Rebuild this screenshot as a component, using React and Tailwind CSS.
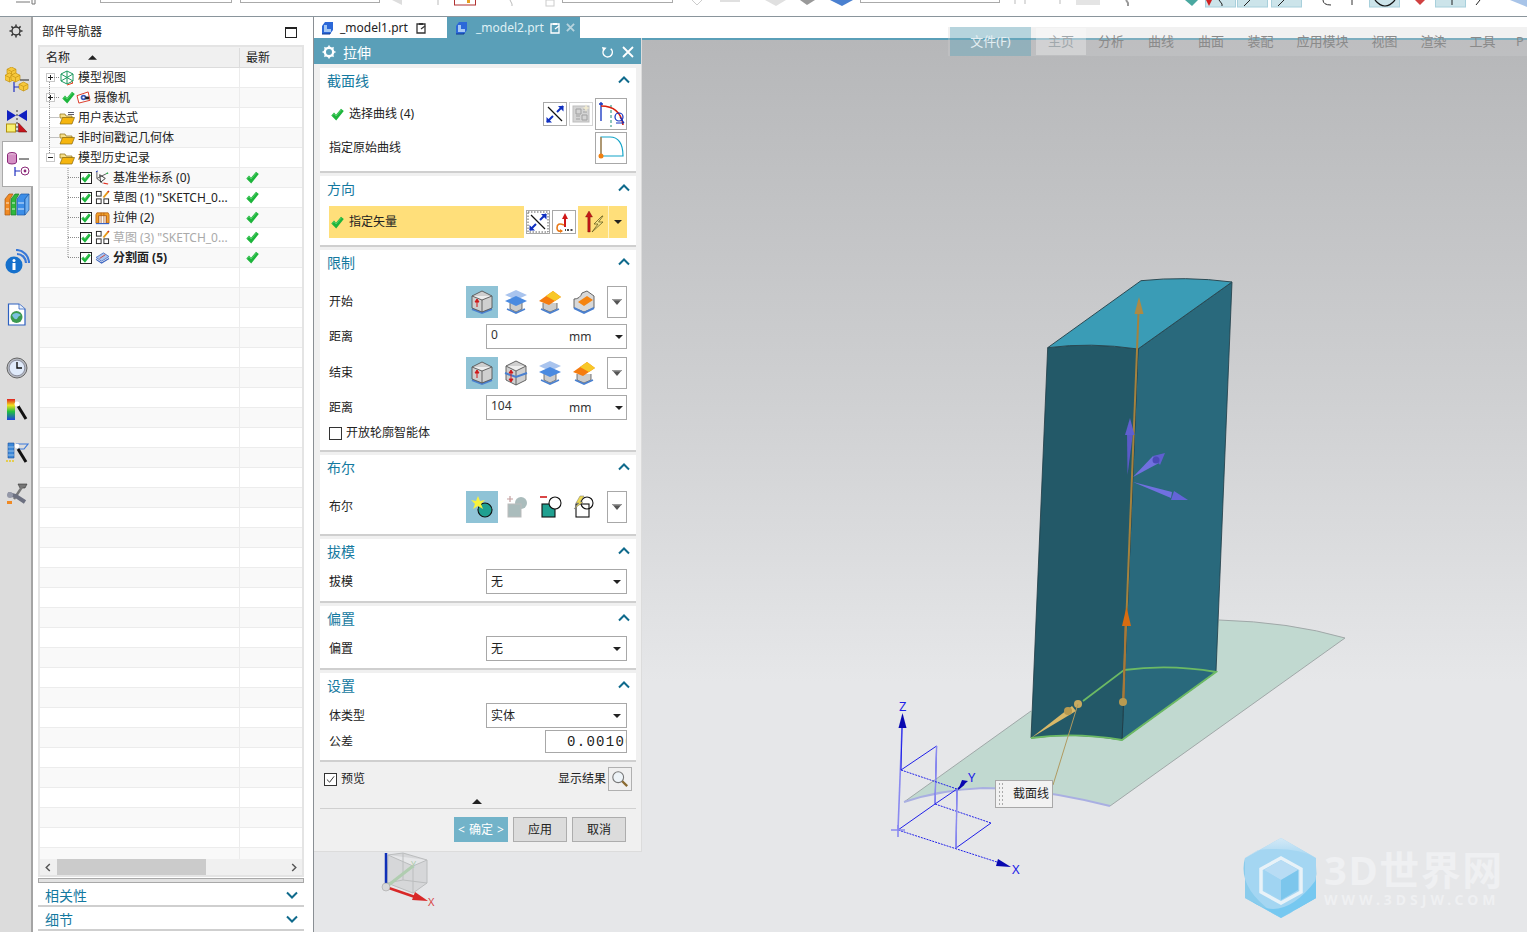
import React from 'react';

/* ---------- small shared drawings ---------- */

function Tick({ className = 'w-[13px] h-[13px]' }) {
  return (
    <svg viewBox="0 0 13 13" className={className}>
      <path d="M0.3 7.5 L3 4.6 L5 6.8 L10 0.8 L12.8 3 L5.2 12.6 Z" fill="#1db53c" />
      <path d="M1.2 7.4 L3 5.6 L5.1 8 L10.2 2" fill="none" stroke="#7be08c" strokeWidth="0.6" />
    </svg>
  );
}

function Chevron({ down = false }) {
  return (
    <svg viewBox="0 0 12 8" className="w-[12px] h-[8px]">
      <path d={down ? 'M1 1.5 L6 6.5 L11 1.5' : 'M1 6.5 L6 1.5 L11 6.5'} fill="none" stroke="#0f6a8c" strokeWidth="2" />
    </svg>
  );
}

function Caret({ color = '#222' }) {
  return (
    <svg viewBox="0 0 8 4" className="w-[8px] h-[4px]">
      <path d="M0 0 H8 L4 4 Z" fill={color} />
    </svg>
  );
}

function Folder({ lines = false }) {
  return (
    <svg viewBox="0 0 16 14" className="w-[16px] h-[14px] shrink-0">
      {lines && <path d="M9 1.5 H15 M9 3.5 H15" stroke="#334" strokeWidth="0.8" />}
      <path d="M1 3 H6 L7 5 H13 V7 H1 Z" fill="#f7e08a" stroke="#8a6a10" strokeWidth="0.7" />
      <path d="M1 13 L3.5 6.5 H15.5 L13 13 Z" fill="#f5b50e" stroke="#8a6a10" strokeWidth="0.7" />
    </svg>
  );
}

function TreeBox({ minus = false }) {
  return (
    <span className="w-[9px] h-[9px] border border-[#c8c8c8] bg-white flex items-center justify-center shrink-0 relative">
      <span className="w-[5px] h-px bg-[#222]" />
      {!minus && <span className="absolute w-px h-[5px] bg-[#222]" />}
    </span>
  );
}

function TreeCheck() {
  return (
    <span className="w-[12px] h-[12px] border border-[#222] bg-white flex items-center justify-center shrink-0">
      <Tick className="w-[10px] h-[10px]" />
    </span>
  );
}

/* ---------- part navigator icons ---------- */

function ModelViewIcon() {
  return (
    <svg viewBox="0 0 16 16" className="w-[16px] h-[16px] shrink-0">
      <path d="M8 1 L14 4 V11 L8 14 L2 11 V4 Z M2 4 L8 7.5 L14 4 M8 7.5 V14 M2 11 L8 7.5 L14 11 M8 1 V7.5" fill="none" stroke="#1b9a5f" strokeWidth="1" />
      <path d="M8 15 L14 13 L12.5 11.5" fill="none" stroke="#e04020" strokeWidth="1" />
    </svg>
  );
}

function CameraIcon() {
  return (
    <svg viewBox="0 0 16 14" className="w-[15px] h-[13px] shrink-0">
      <path d="M1 5 L13 1 L15 10 L3 13 Z" fill="#fff" stroke="#d8301c" strokeWidth="1" />
      <circle cx="8" cy="7" r="3" fill="#3857b8" />
      <circle cx="8" cy="7" r="1.2" fill="#fff" />
      <rect x="10" y="6" width="4" height="3" fill="#222" />
    </svg>
  );
}

function CsysIcon() {
  return (
    <svg viewBox="0 0 16 16" className="w-[15px] h-[15px] shrink-0">
      <path d="M2 1 V9 L8 14 M2 9 L12 4" fill="none" stroke="#555" strokeWidth="1" />
      <path d="M5 5 L11 9 L6 13 Z" fill="none" stroke="#333" strokeWidth="1" />
      <path d="M1 2 L3 1" stroke="#2040d0" strokeWidth="1" />
      <path d="M12 4 L14 3" stroke="#20a040" strokeWidth="1.4" />
      <path d="M9 14 L14 15" stroke="#e03020" strokeWidth="1.2" />
    </svg>
  );
}

function SketchIcon() {
  return (
    <svg viewBox="0 0 16 16" className="w-[15px] h-[15px] shrink-0">
      <rect x="1.5" y="1.5" width="5" height="5" fill="#fff" stroke="#222" />
      <rect x="1.5" y="9.5" width="5" height="5" fill="#fff" stroke="#222" />
      <rect x="9.5" y="9.5" width="5" height="5" fill="#fff" stroke="#222" />
      <path d="M9 8 L14 2" stroke="#e89a18" strokeWidth="2" />
      <path d="M13.5 2.5 L15 1" stroke="#d03020" strokeWidth="1.5" />
    </svg>
  );
}

function ExtrudeIcon() {
  return (
    <svg viewBox="0 0 16 16" className="w-[15px] h-[15px] shrink-0">
      <path d="M2 3 H14 L15 5 V14 H12 V6 H4 V14 H1 V5 Z" fill="#f1a028" stroke="#b05a10" strokeWidth="0.8" />
      <path d="M4 6 V14 M6.5 3 V14 M9.5 3 V14 M12 6 V14" stroke="#b05a10" strokeWidth="0.8" />
      <path d="M1 14.5 H15" stroke="#3060c8" strokeWidth="1.2" />
    </svg>
  );
}

function DivideFaceIcon() {
  return (
    <svg viewBox="0 0 16 14" className="w-[15px] h-[13px] shrink-0">
      <path d="M1 7 L9 2 L15 6 L7 11 Z" fill="#a9c4ee" stroke="#3c64c0" strokeWidth="0.8" />
      <path d="M1 9 L7 13 L15 8" fill="none" stroke="#3c64c0" strokeWidth="1.2" />
      <path d="M5 8 L11 4" stroke="#d8301c" strokeWidth="0.9" />
    </svg>
  );
}

/* ---------- left rail icons ---------- */

function Cube({ x, y, s = 8 }) {
  return (
    <g transform={`translate(${x} ${y}) scale(${s / 8})`}>
      <path d="M0 2 L4 0 L8 2 V6 L4 8 L0 6 Z" fill="#f6c83c" stroke="#c49210" strokeWidth="0.6" />
      <path d="M0 2 L4 4 L8 2 M4 4 V8" fill="none" stroke="#c49210" strokeWidth="0.6" />
    </g>
  );
}

function RailPartsIcon() {
  return (
    <svg viewBox="0 0 24 26" className="w-[24px] h-[26px]">
      <Cube x={2} y={0} s={9} />
      <Cube x={0} y={6} s={9} />
      <Cube x={6} y={6} s={9} />
      <Cube x={14} y={15} s={9} />
      <path d="M9 15 V25 M9 20 H14" stroke="#2030c0" strokeWidth="1.2" fill="none" />
      <path d="M15 13 H24" stroke="#222" strokeWidth="1" />
    </svg>
  );
}

function RailConstraintIcon() {
  return (
    <svg viewBox="0 0 24 24" className="w-[24px] h-[24px]">
      <path d="M2 1 L11 6.5 L2 12 Z M22 1 L13 6.5 L22 12 Z" fill="#1020c0" />
      <path d="M12 1 V24" stroke="#333" strokeWidth="1" strokeDasharray="2 2" />
      <rect x="1.5" y="15" width="9" height="8" fill="#f8f070" stroke="#b09010" strokeWidth="1" />
      <path d="M13.5 14 L22 23 H13.5 Z" fill="#c8141c" stroke="#701010" strokeWidth="0.6" />
    </svg>
  );
}

function RailAssemblyIcon() {
  return (
    <svg viewBox="0 0 24 26" className="w-[24px] h-[26px]">
      <ellipse cx="6" cy="3.5" rx="4.5" ry="2" fill="#e4b8d8" stroke="#8a2878" />
      <path d="M1.5 3.5 V11 A4.5 2 0 0 0 10.5 11 V3.5" fill="#d490c4" stroke="#8a2878" />
      <path d="M13 8 H23" stroke="#222" strokeWidth="1" />
      <path d="M9 16 V25 M9 20 H14" stroke="#2030c0" strokeWidth="1.2" fill="none" />
      <circle cx="19" cy="20" r="4" fill="#fff" stroke="#8a2878" />
      <circle cx="19" cy="20" r="1.4" fill="#8a2878" />
    </svg>
  );
}

function RailBooksIcon() {
  return (
    <svg viewBox="0 0 26 24" className="w-[26px] h-[24px]">
      <path d="M1 6 L5 1 H9 L6 6 V22 H1 Z" fill="#f08a24" stroke="#a85810" strokeWidth="0.7" />
      <path d="M7 6 L11 1 H15 L12 6 V22 H7 Z" fill="#2fb83c" stroke="#1a7a28" strokeWidth="0.7" />
      <path d="M13 6 L17 1 H25 L21 6 V22 H13 Z" fill="#3c8ee8" stroke="#1c5aa8" strokeWidth="0.7" />
      <path d="M21 6 L25 1 V17 L21 22 Z" fill="#6eb0f2" stroke="#1c5aa8" strokeWidth="0.7" />
      <path d="M2 10 H5 M8 10 H11 M14 10 H20 M2 16 H5 M8 16 H11 M14 16 H20" stroke="#fff" strokeWidth="0.8" />
    </svg>
  );
}

function RailInfoIcon() {
  return (
    <svg viewBox="0 0 26 26" className="w-[26px] h-[26px]">
      <path d="M13 5 A9 9 0 0 1 22 14 M12 1 A13 13 0 0 1 25 14" fill="none" stroke="#3878d8" strokeWidth="2.2" />
      <circle cx="10" cy="16" r="8.5" fill="#1570cc" />
      <circle cx="10" cy="11.5" r="1.5" fill="#fff" />
      <rect x="8.5" y="14" width="3" height="7" fill="#fff" />
    </svg>
  );
}

function RailGlobeDocIcon() {
  return (
    <svg viewBox="0 0 20 24" className="w-[20px] h-[24px]">
      <path d="M1.5 1 H12 L18 6 V22 H1.5 Z" fill="#fff" stroke="#2c60c0" strokeWidth="1.2" />
      <path d="M12 1 V6 H18" fill="#e8eef8" stroke="#2c60c0" strokeWidth="0.8" />
      <circle cx="9.5" cy="14" r="6" fill="#3c9a50" />
      <path d="M5 12 Q9 8 14 12 Q11 13 10 16 Q7 17 5 12" fill="#7cc0e0" />
    </svg>
  );
}

function RailClockIcon() {
  return (
    <svg viewBox="0 0 22 22" className="w-[22px] h-[22px]">
      <circle cx="11" cy="11" r="10" fill="#b4b8c0" stroke="#666" />
      <circle cx="11" cy="11" r="7.8" fill="#dfeafa" stroke="#667" strokeWidth="0.6" />
      <path d="M11 5 V11 H16" fill="none" stroke="#111" strokeWidth="1.4" />
    </svg>
  );
}

function RailSpectrumIcon() {
  return (
    <svg viewBox="0 0 22 24" className="w-[22px] h-[24px]">
      <defs>
        <linearGradient id="rainbow" x1="0" y1="0" x2="0" y2="1">
          <stop offset="0" stopColor="#e02020" />
          <stop offset="0.3" stopColor="#f0e020" />
          <stop offset="0.6" stopColor="#20c040" />
          <stop offset="1" stopColor="#2040e0" />
        </linearGradient>
      </defs>
      <rect x="1" y="1" width="8" height="21" fill="url(#rainbow)" />
      <path d="M12 8 L20 21" stroke="#111" strokeWidth="3" />
      <circle cx="11" cy="6" r="2.5" fill="#fff" />
    </svg>
  );
}

function RailColumnWandIcon() {
  return (
    <svg viewBox="0 0 24 24" className="w-[24px] h-[24px]">
      <path d="M3 3 H9 V18 H3 Z" fill="#3c88d8" stroke="#1c50a0" strokeWidth="0.6" />
      <path d="M3 7 H9 M3 11 H9 M3 15 H9" stroke="#bcd8f0" strokeWidth="0.7" />
      <path d="M11 4 H23 L19 9 H13" fill="none" stroke="#3c78d8" strokeWidth="1.2" />
      <path d="M1 21 H10" stroke="#e8c820" strokeWidth="1.6" strokeDasharray="2 1" />
      <path d="M13 9 L21 22" stroke="#111" strokeWidth="3" />
      <circle cx="12" cy="6" r="2.3" fill="#fff" />
    </svg>
  );
}

function RailToolsIcon() {
  return (
    <svg viewBox="0 0 22 24" className="w-[22px] h-[24px]">
      <path d="M12 3 H21 L19 7 H14 Z" fill="#777" stroke="#333" strokeWidth="0.6" />
      <path d="M16 6 L8 18" stroke="#777" strokeWidth="2.4" />
      <path d="M2 13 L10 15 L19 21" stroke="#6c7080" strokeWidth="4" fill="none" />
      <circle cx="4" cy="14" r="3" fill="#9498a8" />
      <rect x="1" y="20" width="5" height="3" fill="#f08a24" />
    </svg>
  );
}

/* ---------- dialog button icons ---------- */

function FlipArrowsIcon({ dotted = false }) {
  return (
    <svg viewBox="0 0 22 22" className="w-[22px] h-[22px]">
      {dotted && <rect x="1" y="1" width="20" height="20" fill="none" stroke="#333" strokeWidth="0.8" strokeDasharray="1.5 1.5" />}
      <path d="M4 4 L18 18" stroke="#111" strokeWidth="1.2" />
      <path d="M13 9 L19 3 M9 13 L3 19" stroke="#1030c0" strokeWidth="2" />
      <path d="M14 3 H19.5 V8.5 Z M8 19.5 H2.5 V14 Z" fill="#1030c0" />
    </svg>
  );
}

function SectionBuilderIcon() {
  return (
    <svg viewBox="0 0 22 22" className="w-[22px] h-[22px]">
      <rect x="3" y="3" width="16" height="16" fill="#d4d4d4" stroke="#bdbdbd" />
      <path d="M6 6 H11 V11 H6 Z M12 12 H17 V17 H12 Z M6 13 H10 M6 16 H10 M13 6 H17 M13 9 H17" stroke="#a0a0a0" fill="none" />
      <path d="M16 1 L17 4 L20 5 L17 6 L16 9 L15 6 L12 5 L15 4 Z" fill="#f0ead0" />
    </svg>
  );
}

function CurveRuleIcon() {
  return (
    <svg viewBox="0 0 30 30" className="w-[30px] h-[30px]">
      <path d="M5 3 V22 M3 5 H7" stroke="#1030c0" strokeWidth="1.3" fill="none" />
      <path d="M15 6 V28" stroke="#188a78" strokeWidth="1" strokeDasharray="3 2" />
      <path d="M5 7 C16 7 25 12 27 26" stroke="#d8200c" strokeWidth="1.6" fill="none" />
      <circle cx="23" cy="18" r="4" fill="none" stroke="#1030c0" strokeWidth="1.2" />
      <path d="M24 18 L28 24 M20 24 H28" stroke="#1030c0" strokeWidth="1.2" />
    </svg>
  );
}

function OriginCurveIcon() {
  return (
    <svg viewBox="0 0 30 30" className="w-[30px] h-[30px]">
      <path d="M5 23 V4 H14 C22 4 27 10 27 23 H5" fill="none" stroke="#12a4c8" strokeWidth="1.2" />
      <path d="M5 23 V4" stroke="#d8782c" strokeWidth="1.2" />
      <circle cx="5" cy="23" r="2.5" fill="#f08010" />
    </svg>
  );
}

function VectorDialogIcon() {
  return (
    <svg viewBox="0 0 22 22" className="w-[22px] h-[22px]">
      <path d="M12 2 L15 8 H13 V16 H11 V8 H9 Z" fill="#d01818" />
      <path d="M11 14 Q4 11 4 17 Q4 21 9 20" fill="none" stroke="#e87818" strokeWidth="1.6" />
      <path d="M7 18 L10 20 L7 22 Z" fill="#e87818" />
      <path d="M14 19 H16 M17.5 19 H19.5 M12 19 H13" stroke="#111" strokeWidth="1.6" />
    </svg>
  );
}

function InferVectorIcon() {
  return (
    <svg viewBox="0 0 24 24" className="w-[24px] h-[24px]">
      <path d="M8 1 L11.5 7 H9.2 V22 H6.8 V7 H4.5 Z" fill="#c81818" stroke="#701010" strokeWidth="0.4" />
      <path d="M21 6 L13 14 H17 L11 22 L22 12 H17.5 L22 6 Z" fill="#f7e68c" stroke="#6a6020" strokeWidth="0.8" />
    </svg>
  );
}

function LimitBase() {
  return <path d="M2 20 L12 24 L22 20" fill="none" stroke="#4a80d0" strokeWidth="2" />;
}

function LimitValueIcon() {
  return (
    <svg viewBox="0 0 24 26" className="w-[24px] h-[26px]">
      <LimitBase />
      <path d="M2 7 L12 2 L22 7 V19 L12 23 L2 19 Z" fill="#cfcfcf" stroke="#555" strokeWidth="0.9" />
      <path d="M2 7 L12 11 L22 7" fill="#eee" stroke="#555" strokeWidth="0.9" />
      <path d="M12 11 V23" stroke="#555" strokeWidth="0.9" />
      <path d="M7 18 V12 M5 13 L7 10 L9 13 Z" fill="#d01818" stroke="#d01818" strokeWidth="1" />
    </svg>
  );
}

function LimitSymmetricIcon() {
  return (
    <svg viewBox="0 0 24 26" className="w-[24px] h-[26px]">
      <path d="M2 6 L12 1 L22 6 V20 L12 25 L2 20 Z" fill="#cfcfcf" stroke="#555" strokeWidth="0.9" />
      <path d="M2 6 L12 11 L22 6" fill="#eee" stroke="#555" strokeWidth="0.9" />
      <path d="M12 11 V25" stroke="#555" strokeWidth="0.9" />
      <path d="M1 13 L12 17 L23 13" fill="none" stroke="#4a80d0" strokeWidth="2" />
      <path d="M7 11 V21 M5 13 L7 10 L9 13 Z M5 19 L7 22 L9 19 Z" fill="#d01818" stroke="#d01818" strokeWidth="0.9" />
    </svg>
  );
}

function LimitNextIcon() {
  return (
    <svg viewBox="0 0 24 26" className="w-[24px] h-[26px]">
      <path d="M6 14 V20 L12 23 L18 20 V14" fill="#ccc" stroke="#555" strokeWidth="0.8" />
      <path d="M1 6 L12 1 L23 6 L12 11 Z" fill="#a9c4ee" />
      <path d="M1 12 L12 7 L23 12 L12 17 Z" fill="#4a8ae0" />
      <path d="M3 20 L12 24 L21 20" fill="none" stroke="#4a80d0" strokeWidth="1.6" />
    </svg>
  );
}

function LimitUntilIcon() {
  return (
    <svg viewBox="0 0 24 26" className="w-[24px] h-[26px]">
      <path d="M5 14 V20 L12 23 L19 20 V14" fill="#ccc" stroke="#555" strokeWidth="0.8" />
      <path d="M1 12 L15 2 L23 8 L11 16 Z" fill="#f57c10" />
      <path d="M8 7 L15 2 L23 8 L17 12 Z" fill="#f8c828" />
      <path d="M3 20 L12 24 L21 20" fill="none" stroke="#4a80d0" strokeWidth="1.6" />
    </svg>
  );
}

function LimitFaceIcon() {
  return (
    <svg viewBox="0 0 24 26" className="w-[24px] h-[26px]">
      <path d="M2 10 Q8 10 10 4 L15 2 L22 7 V19 L12 23 L2 19 Z" fill="#d8d8d8" stroke="#555" strokeWidth="0.9" />
      <path d="M6 13 L15 7 L21 11 L12 17 Z" fill="#f58410" />
      <path d="M2 19 L12 24 L22 19" fill="none" stroke="#4a80d0" strokeWidth="2" />
    </svg>
  );
}

function BoolInferIcon() {
  return (
    <svg viewBox="0 0 24 24" className="w-[24px] h-[24px]">
      <circle cx="15" cy="15" r="7" fill="#20a090" stroke="#111" strokeWidth="1.1" />
      <path d="M8 1 L10 6 L15 5 L11 9 L13 14 L8 11 L3 14 L5 9 L1 5 L6 6 Z" fill="#f8f23c" />
    </svg>
  );
}

function BoolUniteIcon() {
  return (
    <svg viewBox="0 0 24 24" className="w-[24px] h-[24px]">
      <path d="M3 4 H9 M6 1 V7" stroke="#c4a0a0" strokeWidth="1.2" />
      <circle cx="17" cy="8" r="6" fill="#aabcbc" />
      <rect x="4" y="9" width="13" height="13" fill="#aabcbc" stroke="#bbb" />
    </svg>
  );
}

function BoolSubtractIcon() {
  return (
    <svg viewBox="0 0 24 24" className="w-[24px] h-[24px]">
      <path d="M2 2 H9" stroke="#d01818" strokeWidth="1.6" />
      <rect x="4" y="9" width="13" height="13" fill="#20a090" stroke="#111" strokeWidth="1.1" />
      <circle cx="17" cy="8" r="6" fill="#fff" stroke="#111" strokeWidth="1.1" />
    </svg>
  );
}

function BoolIntersectIcon() {
  return (
    <svg viewBox="0 0 24 24" className="w-[24px] h-[24px]">
      <rect x="4" y="9" width="13" height="13" fill="#fff" stroke="#111" strokeWidth="1.1" />
      <circle cx="15" cy="8" r="6" fill="none" stroke="#111" strokeWidth="1.1" />
      <path d="M8 1 L4 8 H7 L2 14 L11 7 H8 L12 1 Z" fill="#f0dc50" stroke="#777" strokeWidth="0.5" />
    </svg>
  );
}

/* ---------- dialog parts ---------- */

function Section({ title, className = '', children }) {
  return (
    <div className={`bg-white border-b-2 border-[#cfcfcf] flex flex-col shrink-0 ${className}`}>
      <div className="h-[26px] shrink-0 pl-[7px] pr-[6px] pb-[2px] flex items-center justify-between">
        <span className="text-[14px] text-[#1479a0]">{title}</span>
        <Chevron />
      </div>
      {children}
    </div>
  );
}

function IconBtn({ active = false, children }) {
  return (
    <span className={`w-[32px] h-[32px] flex items-center justify-center ${active ? 'bg-[#8fc3d6]' : ''}`}>
      {children}
    </span>
  );
}

function DropBtn() {
  return (
    <span className="w-[20px] h-[32px] border border-[#a8a8a8] flex items-center justify-center ml-[5px] bg-white">
      <svg viewBox="0 0 10 6" className="w-[10px] h-[6px]">
        <path d="M0 0 H10 L5 6 Z" fill="#555" />
        <path d="M0 0 H10 L9 1.5 H1 Z" fill="#999" />
      </svg>
    </span>
  );
}

function IconRow({ label, children }) {
  return (
    <div className="h-[32px] flex items-center justify-between pl-[9px] pr-[9px]">
      <span className="text-[12px] text-[#222]">{label}</span>
      <div className="flex items-center gap-[2px]">
        {children}
        <DropBtn />
      </div>
    </div>
  );
}

function ValueInput({ value }) {
  return (
    <div className="h-[25px] flex items-center justify-between pl-[9px] pr-[9px]">
      <span className="text-[12px] text-[#222]">距离</span>
      <div className="w-[141px] h-[25px] border border-[#a8a8a8] flex items-center bg-white">
        <span className="w-[82px] pl-[4px] text-[12px] text-[#333] -mt-[3px]">{value}</span>
        <span className="w-[46px] text-[12px] text-[#333]">mm</span>
        <Caret />
      </div>
    </div>
  );
}

function SelectRow({ label, value }) {
  return (
    <div className="h-[25px] flex items-center justify-between pl-[9px] pr-[9px]">
      <span className="text-[12px] text-[#222]">{label}</span>
      <div className="w-[141px] h-[25px] border border-[#a8a8a8] flex items-center justify-between pl-[4px] pr-[5px] bg-white">
        <span className="text-[12px] text-[#222]">{value}</span>
        <Caret />
      </div>
    </div>
  );
}

function OutlineBtn({ w = 'w-[24px] h-[24px]', children }) {
  return <span className={`${w} border border-[#a8a8a8] bg-white flex items-center justify-center`}>{children}</span>;
}

function Dialog() {
  return (
    <div className="absolute left-0 top-[21px] w-[328px] h-[814px] bg-[#f0f0f0] border-b border-r border-[#dcdcdc] flex flex-col z-10">
      {/* title bar */}
      <div className="h-[26px] shrink-0 bg-[#5a9fb8] flex items-center pl-[8px] pr-[7px] pt-[2px] text-white">
        <svg viewBox="0 0 14 14" className="w-[14px] h-[14px]">
          <circle cx="7" cy="7" r="4.2" fill="none" stroke="#fff" strokeWidth="2.4" />
          <path d="M7 0.5 V2.5 M7 11.5 V13.5 M0.5 7 H2.5 M11.5 7 H13.5 M2.4 2.4 L3.8 3.8 M10.2 10.2 L11.6 11.6 M2.4 11.6 L3.8 10.2 M10.2 3.8 L11.6 2.4" stroke="#fff" strokeWidth="1.6" />
        </svg>
        <span className="ml-[7px] text-[14px]">拉伸</span>
        <svg viewBox="0 0 14 14" className="w-[13px] h-[13px] ml-auto">
          <path d="M10.5 3 A5 5 0 1 1 3 4" fill="none" stroke="#fff" strokeWidth="1.6" />
          <path d="M1 1 L6 2 L2.5 6 Z" fill="#fff" />
        </svg>
        <svg viewBox="0 0 12 12" className="w-[12px] h-[12px] ml-[8px]">
          <path d="M1 1 L11 11 M11 1 L1 11" stroke="#fff" strokeWidth="1.8" />
        </svg>
      </div>

      <div className="pl-[6px] pr-[5px] pt-[4px] flex flex-col gap-[3px]">
        {/* 截面线 */}
        <Section title="截面线" className="h-[105px]">
          <div className="h-[32px] mt-[4px] flex items-center justify-between pl-[11px] pr-[9px]">
            <span className="flex items-center gap-[5px] text-[12px] text-[#222]">
              <Tick />
              选择曲线 (4)
            </span>
            <span className="flex items-center gap-[2px]">
              <OutlineBtn><FlipArrowsIcon /></OutlineBtn>
              <span className="w-[24px] h-[24px] border border-[#d4d4d4] flex items-center justify-center"><SectionBuilderIcon /></span>
              <OutlineBtn w="w-[32px] h-[32px]"><CurveRuleIcon /></OutlineBtn>
            </span>
          </div>
          <div className="h-[32px] mt-[2px] flex items-center justify-between pl-[9px] pr-[9px]">
            <span className="text-[12px] text-[#222]">指定原始曲线</span>
            <OutlineBtn w="w-[32px] h-[32px]"><OriginCurveIcon /></OutlineBtn>
          </div>
        </Section>

        {/* 方向 */}
        <Section title="方向" className="h-[71px]">
          <div className="h-[32px] mt-[4px] flex items-center pl-[9px]">
            <span className="w-[195px] h-[32px] bg-[#ffdf7a] flex items-center pl-[2px] gap-[5px] text-[12px] text-[#222]">
              <Tick />
              指定矢量
            </span>
            <span className="ml-[2px] flex items-center gap-[2px]">
              <OutlineBtn><FlipArrowsIcon dotted /></OutlineBtn>
              <OutlineBtn><VectorDialogIcon /></OutlineBtn>
            </span>
            <span className="ml-[2px] w-[49px] h-[32px] bg-[#ffdf7a] flex items-center">
              <span className="w-[31px] h-[32px] border-r border-[#fff3c8] flex items-center justify-center"><InferVectorIcon /></span>
              <span className="ml-[5px]"><Caret /></span>
            </span>
          </div>
        </Section>

        {/* 限制 */}
        <Section title="限制" className="h-[202px]">
          <div className="mt-[10px] flex flex-col">
            <IconRow label="开始">
              <IconBtn active><LimitValueIcon /></IconBtn>
              <IconBtn><LimitNextIcon /></IconBtn>
              <IconBtn><LimitUntilIcon /></IconBtn>
              <IconBtn><LimitFaceIcon /></IconBtn>
            </IconRow>
            <div className="mt-[6px]"><ValueInput value="0" /></div>
            <div className="mt-[8px]">
              <IconRow label="结束">
                <IconBtn active><LimitValueIcon /></IconBtn>
                <IconBtn><LimitSymmetricIcon /></IconBtn>
                <IconBtn><LimitNextIcon /></IconBtn>
                <IconBtn><LimitUntilIcon /></IconBtn>
              </IconRow>
            </div>
            <div className="mt-[6px]"><ValueInput value="104" /></div>
            <div className="mt-[4px] pl-[9px] flex items-center gap-[4px] text-[12px] text-[#222]">
              <span className="w-[13px] h-[13px] border border-[#333] bg-white" />
              开放轮廓智能体
            </div>
          </div>
        </Section>

        {/* 布尔 */}
        <Section title="布尔" className="h-[81px]">
          <div className="mt-[10px]">
            <IconRow label="布尔">
              <IconBtn active><BoolInferIcon /></IconBtn>
              <IconBtn><BoolUniteIcon /></IconBtn>
              <IconBtn><BoolSubtractIcon /></IconBtn>
              <IconBtn><BoolIntersectIcon /></IconBtn>
            </IconRow>
          </div>
        </Section>

        {/* 拔模 */}
        <Section title="拔模" className="h-[64px]">
          <div className="mt-[4px]"><SelectRow label="拔模" value="无" /></div>
        </Section>

        {/* 偏置 */}
        <Section title="偏置" className="h-[64px]">
          <div className="mt-[4px]"><SelectRow label="偏置" value="无" /></div>
        </Section>

        {/* 设置 */}
        <Section title="设置" className="h-[89px]">
          <div className="mt-[4px]"><SelectRow label="体类型" value="实体" /></div>
          <div className="mt-[2px] h-[23px] flex items-center justify-between pl-[9px] pr-[9px]">
            <span className="text-[12px] text-[#222]">公差</span>
            <span className="w-[82px] h-[23px] border border-[#a8a8a8] bg-white overflow-hidden whitespace-nowrap pl-[21px] text-[14px] leading-[22px] tracking-[1.3px] text-[#222] font-['Liberation_Mono',monospace]">0.00100</span>
          </div>
        </Section>
      </div>

      {/* 预览 / 显示结果 */}
      <div className="h-[24px] mt-[5px] ml-[10px] mr-[9px] flex items-center text-[12px] text-[#222]">
        <span className="w-[13px] h-[13px] border border-[#333] bg-white flex items-center justify-center">
          <svg viewBox="0 0 10 10" className="w-[9px] h-[9px]">
            <path d="M1 5 L4 8 L9 1.5" fill="none" stroke="#333" strokeWidth="1.1" />
          </svg>
        </span>
        <span className="ml-[4px]">预览</span>
        <span className="ml-auto mr-[2px]">显示结果</span>
        <span className="w-[24px] h-[24px] border border-[#b0b0b0] flex items-center justify-center">
          <svg viewBox="0 0 20 20" className="w-[18px] h-[18px]">
            <circle cx="8" cy="8" r="6" fill="#eef4f8" stroke="#777" strokeWidth="1.2" />
            <path d="M12.5 12.5 L18 18" stroke="#8a6a30" strokeWidth="2.6" />
          </svg>
        </span>
      </div>
      <div className="h-[17px] flex items-center justify-center pr-[1px]">
        <svg viewBox="0 0 10 5" className="w-[10px] h-[5px] mt-[3px]">
          <path d="M0 5 H10 L5 0 Z" fill="#222" />
        </svg>
      </div>
      <div className="h-px ml-[6px] mr-[5px] bg-[#d0d0d0]" />
      <div className="mt-[8px] ml-[140px] flex items-center gap-[5px] text-[12px]">
        <span className="w-[54px] h-[25px] bg-[#72b3c9] text-white flex items-center justify-center gap-[4px]">
          <span>&lt;</span>确定<span>&gt;</span>
        </span>
        <span className="w-[54px] h-[25px] bg-[#dcdcdc] border border-[#adadad] text-[#222] flex items-center justify-center">应用</span>
        <span className="w-[54px] h-[25px] bg-[#dcdcdc] border border-[#adadad] text-[#222] flex items-center justify-center">取消</span>
      </div>
    </div>
  );
}

/* ---------- 3D viewport ---------- */

function ModelDrawing() {
  return (
    <svg viewBox="314 40 1213 892" className="absolute left-0 top-0 w-[1213px] h-[892px]">
      <defs>
        <linearGradient id="wmTop" x1="0" y1="0" x2="0" y2="1">
          <stop offset="0" stopColor="#d4e9f6" />
          <stop offset="1" stopColor="#a4d6f2" />
        </linearGradient>
      </defs>

      {/* surface sheet */}
      <path d="M904 802 L1031 711 L1100 660 L1219 620 Q1290 622 1345 638 L1110 806 Q1040 788 983 788 Q940 790 904 802 Z" fill="#c1d9d0" />
      <path d="M904 802 L1031 711 M1219 620 Q1290 622 1345 638 L1110 806" fill="none" stroke="#a0a8a8" strokeWidth="1" />
      <path d="M904 802 Q940 790 983 788 Q1040 788 1110 806" fill="none" stroke="#a9afe2" strokeWidth="2" />

      {/* extruded solid */}
      <path d="M1138 349 L1232 282 L1216 672 L1122 740 Z" fill="#29697c" stroke="#1e3a44" strokeWidth="0.8" />
      <path d="M1047.7 347.7 Q1090 342 1138 349 L1122 740 Q1075 732 1031 738 Z" fill="#235968" stroke="#1e3a44" strokeWidth="0.8" />
      <path d="M1047.7 347.7 L1141 280.7 Q1185 276 1232 282 L1138 349 Q1090 342 1047.7 347.7 Z" fill="#3a9cb6" stroke="#2a4a54" strokeWidth="1" />

      {/* section curve */}
      <path d="M1031 738 Q1075 732 1122 740 L1216 672 Q1170 664 1124 670 L1083 701" fill="none" stroke="#6cba64" strokeWidth="1.8" />

      {/* direction handles */}
      <path d="M1123 702 L1139 300" stroke="#a4823e" strokeWidth="2" />
      <path d="M1139 297 L1143.5 314 H1134.5 Z" fill="#ad8a44" />
      <path d="M1126.5 607 L1131 626 H1122 Z" fill="#d86c10" />
      <path d="M1125.5 626 L1123.5 702" stroke="#a87838" strokeWidth="2" />
      <circle cx="1123" cy="702" r="4" fill="#b89a50" />
      <path d="M1031 738 L1072 706 L1076 711 Z" fill="#d8b868" />
      <circle cx="1068" cy="711" r="4" fill="#b89a50" />
      <circle cx="1078" cy="704" r="4" fill="#c8aa60" />
      <path d="M1078 704 L1053 785" stroke="#b09a60" strokeWidth="1" />

      {/* csys handles on the solid */}
      <path d="M1127.5 475 L1127 433 L1133 433 Z" fill="#5a5ac8" />
      <path d="M1130 418 L1134.5 435 H1125 Z" fill="#5f5fd0" />
      <path d="M1133 477 L1153 456 L1159 463 Z" fill="#7070e0" />
      <path d="M1165 453 L1160 465 L1153 456 Z" fill="#5f5fd0" />
      <circle cx="1156" cy="460" r="3.5" fill="#4a4ab8" />
      <path d="M1133 482 L1172 492 L1171 498 Z" fill="#7070e0" />
      <path d="M1188 500 L1171 500 L1174 491 Z" fill="#6464d8" />

      {/* datum csys */}
      <g stroke="#2020e8" fill="none" strokeWidth="1">
        <path d="M902 728 L898 830" stroke="#8a8af0" strokeWidth="1.6" />
        <path d="M902 728 L901 770" />
        <path d="M901 770 L936.6 746 L935 804 L898 830" />
        <path d="M936.6 746 L935 804" stroke="#8a8af0" strokeWidth="1.4" />
        <path d="M901 770 L957 789 M935 804 L991 823 M898 830 L1000 863" strokeDasharray="2 1" />
        <path d="M991 823 L956 848 L957 789 L935 804" />
        <path d="M957 789 L956 848" stroke="#8a8af0" strokeWidth="1.4" />
        <path d="M891 830 H905 M898 825 V837" stroke="#8a8af0" strokeWidth="1.6" />
      </g>
      <path d="M902.5 713 L906.5 728 H898.5 Z" fill="#0808b0" />
      <path d="M1011 867 L996 866 L998 859 Z" fill="#0808b0" />
      <path d="M968 781 L958 790 L962 780 Z" fill="#0808b0" />
      <path d="M958 789 L964 784" stroke="#0808b0" strokeWidth="2" />
      <text x="899" y="711" fontSize="13" fill="#2020e8">Z</text>
      <text x="968" y="782" fontSize="13" fill="#2020e8">Y</text>
      <text x="1012" y="874" fontSize="13" fill="#2020e8">X</text>

      {/* view triad */}
      <path d="M388 855 L403 853 L427 860 L427 883 L413 893 L387 883 Z M388 855 L413 866 L427 860 M413 866 V893 M403 853 V880 M387 883 L403 880 L427 883" fill="#c8cacc" fillOpacity="0.55" stroke="#bbbdbe" strokeWidth="1" />
      <path d="M386 887 L413 866" stroke="#b0cdb0" strokeWidth="3" />
      <text x="411" y="868" fontSize="9" fill="#b0cdb0">Y</text>
      <path d="M386 887 V853" stroke="#1030b8" strokeWidth="2.5" />
      <path d="M386 887 L415 897" stroke="#d82828" strokeWidth="2.5" />
      <path d="M428 901 L412 900 L415 892 Z" fill="#d82828" />
      <circle cx="386" cy="887" r="4" fill="#d8d8d8" stroke="#999" strokeWidth="0.5" />
      <text x="428" y="906" fontSize="11" fill="#d84848">X</text>

      {/* watermark */}
      <path d="M1281 838 L1316 858 V898 L1281 918 L1245 898 V858 Z" fill="#a4d6f2" />
      <path d="M1281 838 L1316 858 Q1296 846 1258 850 L1245 858 Z" fill="url(#wmTop)" />
      <path d="M1245 858 Q1236 890 1281 918 L1245 898 Z" fill="#8accec" />
      <path d="M1281 918 L1316 898 V866 Q1320 900 1281 918 Z" fill="#74c6ee" />
      <path d="M1250 900 Q1282 925 1316 880 V898 L1281 918 Z" fill="#76c8f0" />
      <path d="M1281 858 L1301 869 V892 L1281 903 L1261 892 V869 Z" fill="none" stroke="#e8f2f8" strokeWidth="3.5" />
      <path d="M1281 860 L1298 870 L1281 880 L1264 870 Z" fill="#b8dcf4" />
      <path d="M1264 870 L1281 880 V900 L1264 890 Z" fill="#a0d4f2" />
      <path d="M1298 870 L1281 880 V900 L1298 890 Z" fill="#7cc6ec" />
    </svg>
  );
}

function RibbonGhost() {
  const tabs = [
    { name: '分析', w: 'w-[50px]' },
    { name: '曲线', w: 'w-[50px]' },
    { name: '曲面', w: 'w-[50px]' },
    { name: '装配', w: 'w-[49px]' },
    { name: '应用模块', w: 'w-[75px]' },
    { name: '视图', w: 'w-[49px]' },
    { name: '渲染', w: 'w-[49px]' },
    { name: '工具', w: 'w-[49px]' },
  ];
  return (
    <div className="absolute right-0 top-[10px] w-[579px] h-[29px] bg-[#d0d0d0]/30 flex items-center pl-[2px] overflow-hidden text-[13px] text-[#8a8a8a]">
      <span className="w-[81px] h-[29px] bg-[#3091b0]/30 text-[#e4eef2] flex items-center justify-center">文件(F)</span>
      <span className="ml-[5px] w-[50px] h-[27px] bg-white/30 flex items-center justify-center text-[#a0a8ac]">主页</span>
      {tabs.map((t) => (
        <span key={t.name} className={`${t.w} text-center`}>{t.name}</span>
      ))}
      <span className="ml-[9px]">P</span>
    </div>
  );
}

/* ---------- part navigator ---------- */

const TREE_ROWS = [
  { key: 'view', text: '模型视图', lead: <><span className="ml-[6px]"><TreeBox /></span><span className="ml-[4px]"><ModelViewIcon /></span></> },
  { key: 'cam', text: '摄像机', lead: <><span className="ml-[6px]"><TreeBox /></span><span className="ml-[7px]"><Tick /></span><span className="ml-[1px]"><CameraIcon /></span></> },
  { key: 'expr', text: '用户表达式', lead: <span className="ml-[19px]"><Folder lines /></span> },
  { key: 'geom', text: '非时间戳记几何体', lead: <span className="ml-[19px]"><Folder /></span> },
  { key: 'hist', text: '模型历史记录', lead: <><span className="ml-[6px]"><TreeBox minus /></span><span className="ml-[4px]"><Folder /></span></> },
  { key: 'csys', text: '基准坐标系 (0)', done: true, lead: <span className="ml-[40px] flex items-center gap-[3px]"><TreeCheck /><CsysIcon /></span> },
  { key: 'sk1', text: '草图 (1) "SKETCH_0...', done: true, lead: <span className="ml-[40px] flex items-center gap-[3px]"><TreeCheck /><SketchIcon /></span> },
  { key: 'ext', text: '拉伸 (2)', done: true, lead: <span className="ml-[40px] flex items-center gap-[3px]"><TreeCheck /><ExtrudeIcon /></span> },
  { key: 'sk3', text: '草图 (3) "SKETCH_0...', done: true, muted: true, lead: <span className="ml-[40px] flex items-center gap-[3px]"><TreeCheck /><SketchIcon /></span> },
  { key: 'div', text: '分割面 (5)', done: true, bold: true, lead: <span className="ml-[40px] flex items-center gap-[3px]"><TreeCheck /><DivideFaceIcon /></span> },
];

const EMPTY_ROWS = Array.from({ length: 30 }, (_, i) => i);

function PartNavigator() {
  return (
    <aside className="w-[281px] shrink-0 border-r border-[#8a8f94] bg-white flex flex-col pl-[5px] pr-[9px]">
      <div className="h-[28px] shrink-0 flex items-center justify-between pl-[4px] pr-[7px] pt-[2px]">
        <span className="text-[12px] text-[#222]">部件导航器</span>
        <span className="w-[12px] h-[11px] border border-[#222] border-t-2" />
      </div>

      <div className="flex-1 min-h-0 border-2 border-[#e4e4e4] flex flex-col">
        <div className="h-[21px] shrink-0 bg-[#f0f0f0] border-b border-[#dcdcdc] flex text-[12px] text-[#222] pt-[1px]">
          <div className="w-[200px] border-r border-[#dcdcdc] flex items-center pl-[6px]">
            名称
            <svg viewBox="0 0 8 4" className="w-[9px] h-[5px] ml-[18px]">
              <path d="M0 4 H8 L4 0 Z" fill="#222" />
            </svg>
          </div>
          <div className="pl-[6px] flex items-center">最新</div>
        </div>

        <div className="relative flex-1 min-h-0 overflow-hidden">
          {TREE_ROWS.map((r, i) => (
            <div key={r.key} className={`h-[20px] border-b border-[#ececec] flex ${i % 2 ? 'bg-[#f9f9f9]' : 'bg-white'}`}>
              <div className="w-[200px] border-r border-[#ececec] flex items-center overflow-hidden whitespace-nowrap">
                {r.lead}
                <span className={`ml-[3px] text-[12px] ${r.muted ? 'text-[#aaaaaa]' : 'text-[#222]'} ${r.bold ? 'font-bold' : ''}`}>{r.text}</span>
              </div>
              {r.done && (
                <div className="pl-[6px] flex items-center"><Tick /></div>
              )}
            </div>
          ))}
          {EMPTY_ROWS.map((i) => (
            <div key={i} className={`h-[20px] border-b border-[#ececec] flex ${i % 2 ? 'bg-[#f9f9f9]' : 'bg-white'}`}>
              <div className="w-[200px] border-r border-[#ececec]" />
            </div>
          ))}
          {/* tree connectors */}
          <svg viewBox="0 0 60 200" className="absolute left-0 top-0 w-[60px] h-[200px] pointer-events-none">
            <path d="M9.5 14 V85 M14 9.5 H19 M14 29.5 H20 M9.5 49.5 H19 M9.5 69.5 H19 M28 100 V190 M28 109.5 H40 M28 129.5 H40 M28 149.5 H40 M28 169.5 H40 M28 189.5 H40" stroke="#8a8a8a" strokeWidth="1" strokeDasharray="1 1" fill="none" />
          </svg>
        </div>

        {/* horizontal scrollbar */}
        <div className="h-[16px] shrink-0 bg-[#f0f0f0] flex items-center">
          <svg viewBox="0 0 6 10" className="w-[6px] h-[9px] ml-[5px]">
            <path d="M5 1 L1 5 L5 9" fill="none" stroke="#555" strokeWidth="1.6" />
          </svg>
          <span className="w-[149px] h-[16px] bg-[#cbcbcb] ml-[6px]" />
          <svg viewBox="0 0 6 10" className="w-[6px] h-[9px] ml-auto mr-[5px]">
            <path d="M1 1 L5 5 L1 9" fill="none" stroke="#555" strokeWidth="1.6" />
          </svg>
        </div>
      </div>

      <div className="h-[5px] shrink-0 mt-[1px] bg-[#e2e2e2] border border-[#a8a8a8]" />
      <div className="h-[24px] shrink-0 border-b-2 border-[#cfcfcf] flex items-center justify-between pl-[7px] pr-[6px] pt-[2px]">
        <span className="text-[14px] text-[#1479a0]">相关性</span>
        <Chevron down />
      </div>
      <div className="h-[24px] shrink-0 border-b-2 border-[#cfcfcf] flex items-center justify-between pl-[7px] pr-[6px] pt-[2px]">
        <span className="text-[14px] text-[#1479a0]">细节</span>
        <Chevron down />
      </div>
      <div className="h-px shrink-0" />
    </aside>
  );
}

function LeftRail() {
  return (
    <nav className="w-[33px] shrink-0 bg-[#dcdcdc] border-r-2 border-[#a4a4a4] flex flex-col pl-[3px]">
      <div className="h-[27px] -ml-[3px] flex items-center justify-center">
        <svg viewBox="0 0 14 14" className="w-[14px] h-[14px]">
          <circle cx="7" cy="7" r="4" fill="none" stroke="#333" strokeWidth="1.4" />
          <path d="M7 0.5 V2.8 M7 11.2 V13.5 M0.5 7 H2.8 M11.2 7 H13.5 M2.4 2.4 L4 4 M10 10 L11.6 11.6 M2.4 11.6 L4 10 M10 4 L11.6 2.4" stroke="#333" strokeWidth="1.5" />
        </svg>
      </div>
      <div className="h-[40px] mt-[16px] flex items-center justify-center"><RailPartsIcon /></div>
      <div className="h-[40px] mt-px flex items-center justify-center"><RailConstraintIcon /></div>
      <div className="h-[46px] -ml-px -mr-[2px] bg-white border-y border-l border-[#aaaaaa] flex items-center justify-center"><RailAssemblyIcon /></div>
      <div className="h-[36px] flex items-center justify-center"><RailBooksIcon /></div>
      <div className="h-[40px] mt-[19px] flex items-center justify-center"><RailInfoIcon /></div>
      <div className="h-[40px] mt-[13px] flex items-center justify-center"><RailGlobeDocIcon /></div>
      <div className="h-[40px] mt-[13px] flex items-center justify-center"><RailClockIcon /></div>
      <div className="h-[40px] mt-[2px] flex items-center justify-center"><RailSpectrumIcon /></div>
      <div className="h-[40px] mt-[2px] flex items-center justify-center"><RailColumnWandIcon /></div>
      <div className="h-[40px] mt-px flex items-center justify-center"><RailToolsIcon /></div>
    </nav>
  );
}

/* ---------- top toolbar remnant and file tabs ---------- */

function TopStrip() {
  return (
    <header className="h-[17px] shrink-0 bg-white border-b border-[#8a959c] relative flex items-start">
      <span className="ml-[100px] w-[132px] h-[3px] border border-t-0 border-[#aaaaaa]" />
      <span className="ml-[8px] w-[140px] h-[3px] border border-t-0 border-[#aaaaaa]" />
      <span className="ml-[182px] w-[111px] h-[3px] border border-t-0 border-[#aaaaaa]" />
      <span className="ml-[187px] w-[140px] h-[3px] border border-t-0 border-[#aaaaaa]" />
      {/* clipped ribbon icons */}
      <svg viewBox="0 0 1527 16" className="absolute left-0 top-0 w-[1527px] h-[16px]">
        <path d="M16 2 H30 M32 0 V4 H35 V0" stroke="#777" strokeWidth="1" fill="none" />
        <path d="M392 0 L402 5 V0" fill="#ddd" />
        <path d="M438 0 V5" stroke="#ddd" strokeWidth="2" />
        <rect x="454.5" y="-2" width="21" height="7" fill="none" stroke="#b03030" />
        <rect x="467" y="0" width="3" height="3" fill="#e8a020" />
        <path d="M510 0 L512 4 V6" stroke="#bbb" fill="none" />
        <rect x="546" y="0" width="8" height="6" fill="none" stroke="#ccc" />
        <path d="M692 0 L697 5 L702 0" fill="none" stroke="#ccc" />
        <path d="M720 0 H740 V2 H720 Z" fill="#e0e0e0" />
        <path d="M765 0 H786 L776 6 Z" fill="#e0e0e0" />
        <path d="M800 0 H815 L807 5 Z" fill="#999" />
        <path d="M830 0 H853 L842 6 Z" fill="#4a80d0" />
        <path d="M1015 0 V4 M1025 0 V4 M1060 0 V4" stroke="#bbb" />
        <rect x="1076" y="0" width="24" height="5" fill="#e4e4e4" />
        <path d="M1126 0 L1128 3 V6" stroke="#999" strokeWidth="2" fill="none" />
        <path d="M1185 0 H1198 L1192 6 Z" fill="#4aa8a0" />
        <rect x="1205.5" y="-2" width="30" height="9" fill="#cce4ea" stroke="#a8d0dc" />
        <rect x="1237.5" y="-2" width="30" height="9" fill="#cce4ea" stroke="#a8d0dc" />
        <rect x="1271.5" y="-2" width="30" height="9" fill="#cce4ea" stroke="#a8d0dc" />
        <rect x="1369.5" y="-2" width="30" height="9" fill="#cce4ea" stroke="#a8d0dc" />
        <rect x="1435.5" y="-2" width="30" height="9" fill="#cce4ea" stroke="#a8d0dc" />
        <path d="M1206 0 H1212 L1209 6 Z" fill="#d02020" />
        <path d="M1219 0 L1222 4 V6 M1250 0 L1244 6 M1284 0 L1278 6 M1452 0 V5 M1480 0 L1476 5" stroke="#222" fill="none" />
        <path d="M1323 0 Q1323 5 1331 5 M1352 0 V5" stroke="#333" fill="none" />
        <path d="M1375 0 Q1385 12 1395 0" stroke="#111" fill="none" strokeWidth="1.2" />
        <path d="M1415 0 H1425 L1420 5 Z" fill="#d04040" />
        <path d="M1510 0 H1527 V7 Z" fill="#a8c4e8" />
      </svg>
    </header>
  );
}

function PartGlyph() {
  return (
    <svg viewBox="0 0 14 14" className="w-[14px] h-[14px]">
      <path d="M2 5 L5 1 H13 V9 L10 13 H2 Z" fill="#2c68d8" />
      <path d="M4 4 H7 V8 H11 V11 H4 Z" fill="#a4c8f4" />
      <path d="M2 13 H10 V12" stroke="#103a90" fill="none" />
    </svg>
  );
}

function DocGlyph({ color }) {
  return (
    <svg viewBox="0 0 10 12" className="w-[10px] h-[12px]">
      <path d="M1 2 H9 V11 H1 Z" fill="none" stroke={color} strokeWidth="1.3" />
      <path d="M3 1 H7 V3 H3 Z" fill={color} />
      <path d="M5 7 L9 4" stroke={color} strokeWidth="1.2" />
    </svg>
  );
}

function FileTabs() {
  return (
    <div className="h-[21px] shrink-0 bg-white flex text-[12px]">
      <div className="w-[133px] flex items-center pl-[6px] text-[#222]">
        <PartGlyph />
        <span className="ml-[6px]">_model1.prt</span>
        <span className="ml-[8px]"><DocGlyph color="#333" /></span>
      </div>
      <div className="w-[133px] bg-[#5a9fb8] flex items-center pl-[7px] text-[#dff0f5]">
        <PartGlyph />
        <span className="ml-[8px]">_model2.prt</span>
        <span className="ml-[6px]"><DocGlyph color="#fff" /></span>
        <svg viewBox="0 0 10 10" className="w-[9px] h-[9px] ml-[6px]">
          <path d="M1 1 L9 9 M9 1 L1 9" stroke="#b8d4de" strokeWidth="2" />
        </svg>
      </div>
    </div>
  );
}

export default function App() {
  return (
    <div className="w-[1527px] h-[932px] overflow-hidden flex flex-col bg-white font-['Noto_Sans','Noto_Sans_CJK_SC',sans-serif]">
      <TopStrip />
      <div className="flex-1 min-h-0 flex">
        <LeftRail />
        <PartNavigator />
        <main className="relative flex-1 min-w-0 flex flex-col">
          <FileTabs />
          <div className="h-[2px] shrink-0 bg-[#5a9fb8]" />
          <div className="relative flex-1 min-h-0 bg-[linear-gradient(180deg,#b6b7b9_0%,#cfd0d2_40%,#e6e7e9_72%,#e6e7e9_100%)]">
            <ModelDrawing />
            {/* label pinned to the section curve */}
            <div className="absolute left-[681px] top-[740px] w-[58px] h-[28px] bg-[#f2f2f2] border border-[#a8a8a8] flex items-center text-[12px] text-[#222]">
              <span className="ml-[2px] w-[6px] h-[24px] bg-[radial-gradient(#aaaaaa_1px,transparent_1px)] bg-[length:3px_4px]" />
              <span className="ml-[9px]">截面线</span>
            </div>
            {/* watermark text */}
            <div className="absolute left-[1010px] top-[810px] flex flex-col text-[#eff0f2] font-bold leading-none">
              <span className="h-[40px] text-[40px] tracking-[1.5px]">3D世界网</span>
              <span className="text-[14px] tracking-[4px] mt-[3px]">WWW.3DSJW.COM</span>
            </div>
          </div>
          <RibbonGhost />
          <Dialog />
        </main>
      </div>
    </div>
  );
}
